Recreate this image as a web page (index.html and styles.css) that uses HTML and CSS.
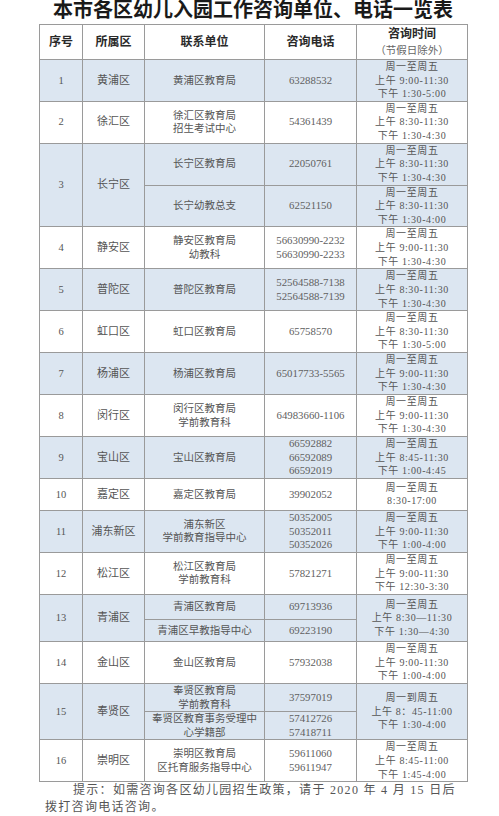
FILE: index.html
```html
<!DOCTYPE html>
<html lang="zh-CN">
<head>
<meta charset="utf-8">
<title>本市各区幼儿入园工作咨询单位、电话一览表</title>
<link rel="stylesheet" href="styles.css">
</head>
<body>
<div class="page">
  <h1 class="title">本市各区幼儿入园工作咨询单位、电话一览表</h1>
  <table class="list">
    <colgroup>
      <col class="c-no"><col class="c-dist"><col class="c-unit"><col class="c-tel"><col class="c-time">
    </colgroup>
    <thead>
      <tr class="rh">
        <th>序号</th><th>所属区</th><th>联系单位</th><th>咨询电话</th>
        <th>咨询时间<br><span class="sub">（节假日除外）</span></th>
      </tr>
    </thead>
    <tbody>
      <tr class="r41 blue">
        <td>1</td><td class="dist">黄浦区</td><td>黄浦区教育局</td><td class="tel">63288532</td>
        <td class="time">周一至周五<br>上午 9:00-11:30<br>下午 1:30-5:00</td>
      </tr>
      <tr class="r42">
        <td>2</td><td class="dist">徐汇区</td><td>徐汇区教育局<br>招生考试中心</td><td class="tel">54361439</td>
        <td class="time">周一至周五<br>上午 8:30-11:30<br>下午 1:30-4:30</td>
      </tr>
      <tr class="r41 blue">
        <td rowspan="2">3</td><td rowspan="2" class="dist">长宁区</td><td>长宁区教育局</td><td class="tel">22050761</td>
        <td class="time">周一至周五<br>上午 8:30-11:30<br>下午 1:30-4:30</td>
      </tr>
      <tr class="r41 blue">
        <td>长宁幼教总支</td><td class="tel">62521150</td>
        <td class="time">周一至周五<br>上午 8:30-11:30<br>下午 1:30-4:00</td>
      </tr>
      <tr class="r42">
        <td>4</td><td class="dist">静安区</td><td>静安区教育局<br>幼教科</td><td class="tel">56630990-2232<br>56630990-2233</td>
        <td class="time">周一至周五<br>上午 9:00-11:30<br>下午 1:30-4:30</td>
      </tr>
      <tr class="r41 blue">
        <td>5</td><td class="dist">普陀区</td><td>普陀区教育局</td><td class="tel">52564588-7138<br>52564588-7139</td>
        <td class="time">周一至周五<br>上午 8:30-11:30<br>下午 1:30-4:30</td>
      </tr>
      <tr class="r42">
        <td>6</td><td class="dist">虹口区</td><td>虹口区教育局</td><td class="tel">65758570</td>
        <td class="time">周一至周五<br>上午 8:30-11:30<br>下午 1:30-5:00</td>
      </tr>
      <tr class="r42 blue">
        <td>7</td><td class="dist">杨浦区</td><td>杨浦区教育局</td><td class="tel">65017733-5565</td>
        <td class="time">周一至周五<br>上午 9:00-11:30<br>下午 1:30-4:30</td>
      </tr>
      <tr class="r42">
        <td>8</td><td class="dist">闵行区</td><td>闵行区教育局<br>学前教育科</td><td class="tel">64983660-1106</td>
        <td class="time">周一至周五<br>上午 9:00-11:30<br>下午 1:30-4:30</td>
      </tr>
      <tr class="r40 blue">
        <td>9</td><td class="dist">宝山区</td><td>宝山区教育局</td><td class="tel">66592882<br>66592089<br>66592019</td>
        <td class="time">周一至周五<br>上午 8:45-11:30<br>下午 1:00-4:45</td>
      </tr>
      <tr class="r32">
        <td>10</td><td class="dist">嘉定区</td><td>嘉定区教育局</td><td class="tel">39902052</td>
        <td class="time">周一至周五<br>8:30-17:00</td>
      </tr>
      <tr class="r42 blue">
        <td>11</td><td class="dist">浦东新区</td><td>浦东新区<br>学前教育指导中心</td><td class="tel">50352005<br>50352011<br>50352026</td>
        <td class="time">周一至周五<br>上午 9:00-11:30<br>下午 1:00-4:00</td>
      </tr>
      <tr class="r42">
        <td>12</td><td class="dist">松江区</td><td>松江区教育局<br>学前教育科</td><td class="tel">57821271</td>
        <td class="time">周一至周五<br>上午 9:00-11:30<br>下午 12:30-3:30</td>
      </tr>
      <tr class="r25 blue">
        <td rowspan="2">13</td><td rowspan="2" class="dist">青浦区</td><td>青浦区教育局</td><td class="tel">69713936</td>
        <td rowspan="2" class="time">周一至周五<br>上午 8:30—11:30<br>下午 1:30—4:30</td>
      </tr>
      <tr class="r22 blue">
        <td>青浦区早教指导中心</td><td class="tel">69223190</td>
      </tr>
      <tr class="r42">
        <td>14</td><td class="dist">金山区</td><td>金山区教育局</td><td class="tel">57932038</td>
        <td class="time">周一至周五<br>上午 9:00-11:30<br>下午 1:00-4:00</td>
      </tr>
      <tr class="r28 blue">
        <td rowspan="2">15</td><td rowspan="2" class="dist">奉贤区</td><td>奉贤区教育局<br>学前教育科</td><td class="tel">37597019</td>
        <td rowspan="2" class="time">周一到周五<br>上午 8：45-11:00<br>下午 1:30-4:00</td>
      </tr>
      <tr class="r27 blue">
        <td>奉贤区教育事务受理中<br>心学籍部</td><td class="tel">57412726<br>57418711</td>
      </tr>
      <tr class="r42">
        <td>16</td><td class="dist">崇明区</td><td>崇明区教育局<br>区托育服务指导中心</td><td class="tel">59611060<br>59611947</td>
        <td class="time">周一至周五<br>上午 8:45-11:00<br>下午 1:45-4:00</td>
      </tr>
    </tbody>
  </table>
  <p class="note">提示：如需咨询各区幼儿园招生政策，请于 2020 年 4 月 15 日后拨打咨询电话咨询。</p>
</div>
</body>
</html>
```

FILE: styles.css
```css
html, body {
  margin: 0;
  padding: 0;
  background: #ffffff;
}

body {
  font-family: "Liberation Serif", "Noto Sans CJK SC", serif;
  color: #555555;
}

.page {
  width: 428px;
  margin-left: 39px;
}

.title {
  margin: 0;
  height: 24px;
  font-family: "Liberation Serif", "Noto Sans CJK SC", serif;
  font-size: 20px;
  line-height: 20px;
  font-weight: bold;
  color: #1a1a1a;
  text-align: center;
  white-space: nowrap;
}

.list {
  width: 428px;
  border-collapse: collapse;
  table-layout: fixed;
}

.c-no { width: 43px; }
.c-dist { width: 62px; }
.c-unit { width: 120px; }
.c-tel { width: 92px; }
.c-time { width: 111px; }

.list th,
.list td {
  border: 1px solid #9a9a9a;
  padding: 0;
  text-align: center;
  vertical-align: middle;
  font-size: 10.5px;
  line-height: 13.6px;
  font-weight: normal;
  white-space: nowrap;
}

.list th {
  font-size: 12px;
  line-height: 16px;
  font-weight: bold;
  color: #2a2a2a;
}

.list th .sub {
  font-size: 10.5px;
  font-weight: normal;
  color: #666666;
}

.list td.dist {
  font-size: 11px;
}

.list td.tel {
  font-size: 10.8px;
  color: #606060;
}

.list td.time {
  font-size: 10px;
  letter-spacing: 0.6px;
}

.blue td {
  background: #dce6f1;
}

.rh { height: 35px; }
.r41 { height: 41px; }
.r42 { height: 42px; }
.r40 { height: 40px; }
.r32 { height: 32px; }
.r25 { height: 25px; }
.r22 { height: 22px; }
.r28 { height: 28px; }
.r27 { height: 27px; }

.note {
  margin: 0;
  padding-left: 6px;
  font-size: 12px;
  line-height: 17px;
  letter-spacing: 1.3px;
  text-indent: 28px;
  color: #555555;
}
```
